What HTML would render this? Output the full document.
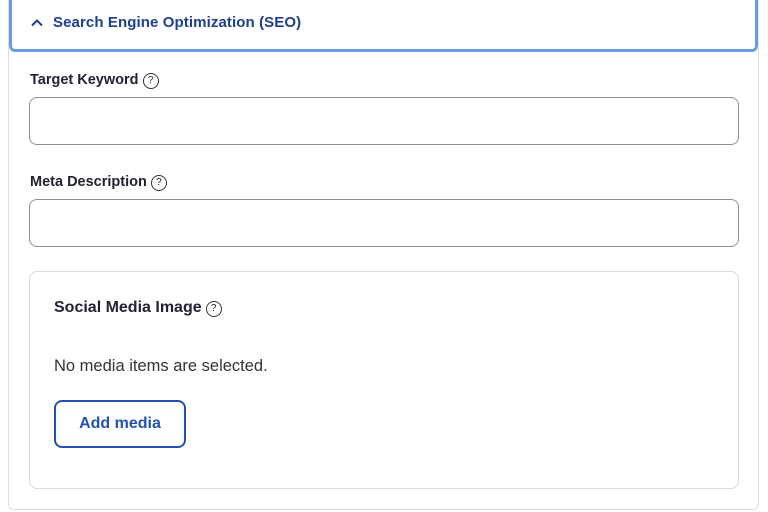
<!DOCTYPE html>
<html><head><style>
body{margin:0;width:768px;height:512px;background:#fff;font-family:"Liberation Sans",sans-serif;position:relative;overflow:hidden;color:#222330}
.outer{position:absolute;left:8px;top:-10px;width:751px;height:520px;border:1px solid #dedee2;border-radius:6px;box-sizing:border-box}
.head{position:absolute;left:9px;top:-10px;width:749px;height:62px;border:3px solid #6b9ce0;border-radius:6px;box-sizing:border-box;background:#fff}
.head span{position:absolute;left:41px;top:21px;font-size:15px;font-weight:bold;color:#1d3f8f;letter-spacing:0.1px}
.chev{position:absolute;left:18px;top:25px}
.lab{position:absolute;left:30px;font-size:14.5px;font-weight:bold;color:#222330}
.q{display:inline-block;width:14px;height:14px;border:1.2px solid #333;border-radius:50%;font-size:10px;font-weight:normal;text-align:center;line-height:14px;margin-left:4px;vertical-align:1px}
.inp{position:absolute;left:29px;width:710px;height:48px;border:1px solid #8e8e96;border-radius:8px;box-sizing:border-box}
.card{position:absolute;left:29px;top:271px;width:710px;height:218px;border:1px solid #d8d8dd;border-radius:8px;box-sizing:border-box}
.btn{position:absolute;left:54px;top:400px;width:132px;height:48px;border:2px solid #2350b5;border-radius:8px;box-sizing:border-box;font-size:16px;font-weight:bold;color:#2350b5;text-align:center;line-height:44px}
</style></head><body>
<div class="outer"></div>
<div class="head"><svg class="chev" width="14" height="9" viewBox="0 0 14 9"><path d="M2 7.5 L7 2.5 L12 7.5" fill="none" stroke="#1d3f8f" stroke-width="2"/></svg><span>Search Engine Optimization (SEO)</span></div>
<div class="lab" style="top:72px">Target Keyword<span class="q">?</span></div>
<div class="inp" style="top:97px"></div>
<div class="lab" style="top:174px">Meta Description<span class="q">?</span></div>
<div class="inp" style="top:199px"></div>
<div class="card"></div>
<div class="lab" style="left:54px;top:299px;font-size:16px">Social Media Image<span class="q">?</span></div>
<div style="position:absolute;left:54px;top:357px;font-size:16.5px;color:#333">No media items are selected.</div>
<div class="btn">Add media</div>
</body></html>
